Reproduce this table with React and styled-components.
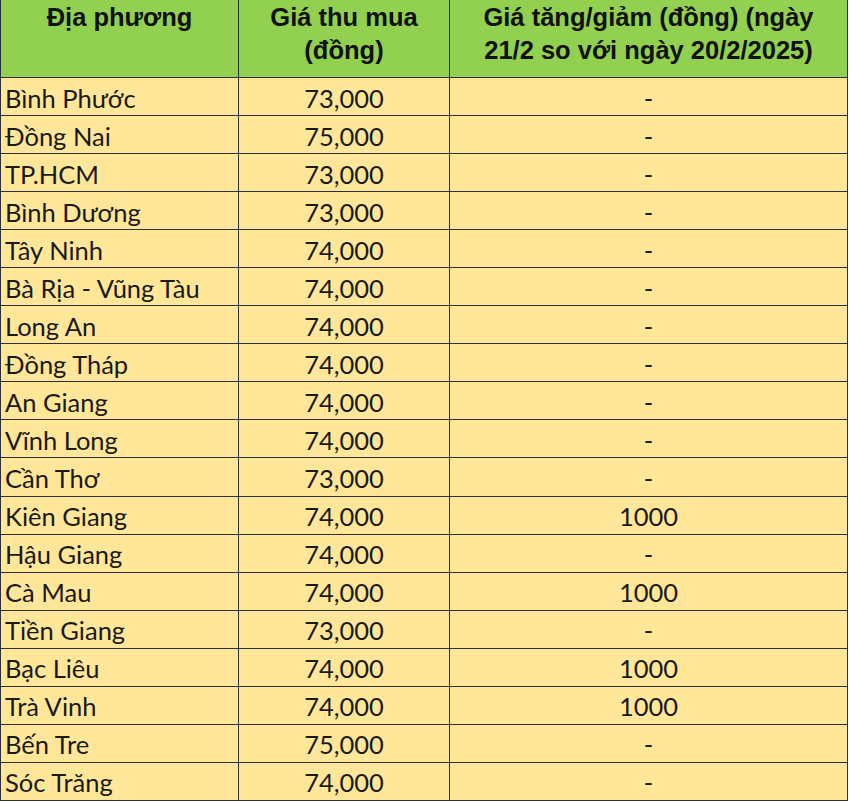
import React from "react";
import styled, { createGlobalStyle } from "styled-components";

const GlobalStyle = createGlobalStyle`
  html, body {
    margin: 0;
    padding: 0;
    background: #ffffff;
  }
`;

const Table = styled.div`
  display: grid;
  grid-template-columns: 238px 211px 398px;
  grid-template-rows: 78px repeat(19, 38.06px);
  width: 849px;
  border-left: 1px solid #2b2f3a;
  box-sizing: border-box;
`;

const HeadCell = styled.div`
  background: #92d050;
  border-right: 1px solid #2b2f3a;
  border-bottom: 1px solid #2b2f3a;
  font-family: "Liberation Sans", Arial, sans-serif;
  font-weight: 700;
  font-size: 25.5px;
  line-height: 33px;
  color: #111;
  text-align: center;
  padding-top: 1px;
`;

const Cell = styled.div`
  background: #ffe699;
  border-right: 1px solid #2b2f3a;
  border-bottom: 1px solid #2b2f3a;
  font-family: Lato, "Open Sans", sans-serif;
  font-size: 25.5px;
  color: #1a1a1a;
  display: flex;
  align-items: center;
  justify-content: ${(p) => (p.$left ? "flex-start" : "center")};
  padding-left: ${(p) => (p.$left ? "4px" : "0")};
  padding-top: 2px;
`;

const rows = [
  ["Bình Phước", "73,000", "-"],
  ["Đồng Nai", "75,000", "-"],
  ["TP.HCM", "73,000", "-"],
  ["Bình Dương", "73,000", "-"],
  ["Tây Ninh", "74,000", "-"],
  ["Bà Rịa - Vũng Tàu", "74,000", "-"],
  ["Long An", "74,000", "-"],
  ["Đồng Tháp", "74,000", "-"],
  ["An Giang", "74,000", "-"],
  ["Vĩnh Long", "74,000", "-"],
  ["Cần Thơ", "73,000", "-"],
  ["Kiên Giang", "74,000", "1000"],
  ["Hậu Giang", "74,000", "-"],
  ["Cà Mau", "74,000", "1000"],
  ["Tiền Giang", "73,000", "-"],
  ["Bạc Liêu", "74,000", "1000"],
  ["Trà Vinh", "74,000", "1000"],
  ["Bến Tre", "75,000", "-"],
  ["Sóc Trăng", "74,000", "-"],
];

export default function App() {
  return (
    <>
      <GlobalStyle />
      <Table>
        <HeadCell>Địa phương</HeadCell>
        <HeadCell>
          Giá thu mua
          <br />
          (đồng)
        </HeadCell>
        <HeadCell>
          Giá tăng/giảm (đồng) (ngày
          <br />
          21/2 so với ngày 20/2/2025)
        </HeadCell>
        {rows.map(([place, price, diff]) => (
          <React.Fragment key={place}>
            <Cell $left>{place}</Cell>
            <Cell>{price}</Cell>
            <Cell>{diff}</Cell>
          </React.Fragment>
        ))}
      </Table>
    </>
  );
}
